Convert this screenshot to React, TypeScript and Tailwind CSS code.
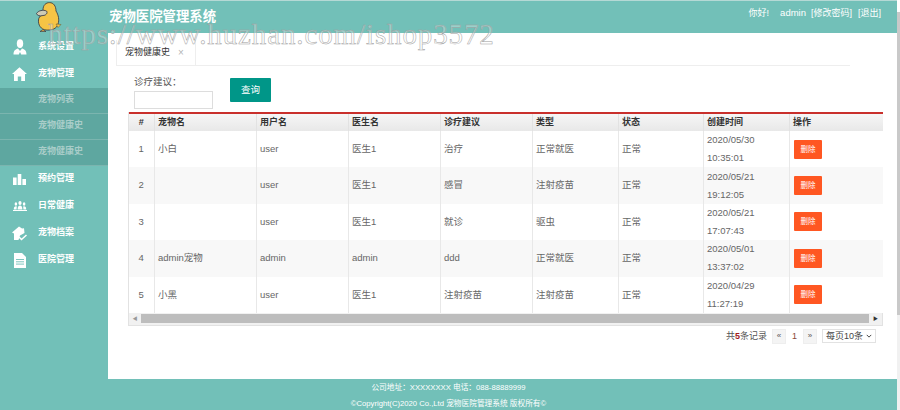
import type { ReactNode } from "react";

const cjk = "font-['Liberation_Sans','Noto_Sans_CJK_SC',sans-serif]";

const columns = [
  { label: "#", width: "w-[25px]", center: true },
  { label: "宠物名", width: "w-[102px]" },
  { label: "用户名", width: "w-[92px]" },
  { label: "医生名", width: "w-[92px]" },
  { label: "诊疗建议", width: "w-[92px]" },
  { label: "类型", width: "w-[86px]" },
  { label: "状态", width: "w-[85px]" },
  { label: "创建时间", width: "w-[86px]" },
  { label: "操作", width: "w-[94px]" },
];

const rows = [
  ["1", "小白", "user", "医生1", "治疗", "正常就医", "正常", "2020/05/30", "10:35:01"],
  ["2", "", "user", "医生1", "感冒", "注射疫苗", "正常", "2020/05/21", "19:12:05"],
  ["3", "", "user", "医生1", "就诊", "驱虫", "正常", "2020/05/21", "17:07:43"],
  ["4", "admin宠物", "admin", "admin", "ddd", "正常就医", "正常", "2020/05/01", "13:37:02"],
  ["5", "小黑", "user", "医生1", "注射疫苗", "注射疫苗", "正常", "2020/04/29", "11:27:19"],
];

function Duck() {
  return (
    <svg viewBox="0 0 26 30" className="h-[30px] w-[26px]">
      <path
        d="M7 8 C7 3 10 0.6 13.5 0.6 C17.5 0.6 20 4 20 9 C22.5 13 23.5 18 22 22 C21 27 15 28.5 10 28 C5 27.5 2 23 2.5 18 C2.7 15.5 4 14 6 13 Z"
        fill="#f6c445"
        stroke="#2f3140"
        strokeWidth="0.8"
      />
      <path d="M0.5 11.5 C2.5 8.5 7 7.5 10.5 9 C12 11 10 13.5 7 13.5 C4 14.5 1 13.5 0.5 11.5 Z" fill="#cfcbb5" stroke="#2f3140" strokeWidth="0.8" />
      <path d="M7 27.5 L4 29.5 L10 29.5 Z" fill="#f0b040" stroke="#2f3140" strokeWidth="0.6" />
      <path d="M20 22 L25 22.5 L22 25.5 Z" fill="#f6c445" stroke="#5a5330" strokeWidth="0.5" />
    </svg>
  );
}

function UserIcon() {
  return (
    <svg viewBox="0 0 14 16" className="h-[16px] w-[14px] fill-white">
      <ellipse cx="7" cy="4.6" rx="3.2" ry="4.4" />
      <path d="M0.5 15.5 C0.5 11.5 2.5 10 5 9.4 L7 12 L9 9.4 C11.5 10 13.5 11.5 13.5 15.5 L8.2 15.5 L7 13 L5.8 15.5 Z" />
    </svg>
  );
}

function HomeIcon() {
  return (
    <svg viewBox="0 0 15 14" className="h-[14px] w-[15px] fill-white">
      <path d="M7.5 0.3 L15 7 L13 7 L13 14 L9.2 14 L9.2 9.5 L5.8 9.5 L5.8 14 L2 14 L2 7 L0 7 Z" />
    </svg>
  );
}

function ChartIcon() {
  return (
    <svg viewBox="0 0 13 11" className="h-[11px] w-[13px] fill-white">
      <rect x="0" y="3.5" width="3.6" height="7.5" />
      <rect x="4.7" y="0" width="3.6" height="11" />
      <rect x="9.4" y="5" width="3.6" height="6" />
    </svg>
  );
}

function PeopleIcon() {
  return (
    <svg viewBox="0 0 14 10" className="h-[10px] w-[14px] fill-white">
      <ellipse cx="7" cy="2" rx="1.6" ry="2" />
      <path d="M4.6 8.4 C4.6 5.6 5.6 4.4 7 4.4 C8.4 4.4 9.4 5.6 9.4 8.4 Z" />
      <ellipse cx="2.9" cy="3" rx="1.3" ry="1.7" />
      <path d="M0.8 8.4 C0.8 6.4 1.6 5.2 2.9 5.2 L3.9 5.5 C3.6 6.4 3.6 7.4 3.6 8.4 Z" />
      <ellipse cx="11.1" cy="3" rx="1.3" ry="1.7" />
      <path d="M13.2 8.4 C13.2 6.4 12.4 5.2 11.1 5.2 L10.1 5.5 C10.4 6.4 10.4 7.4 10.4 8.4 Z" />
      <rect x="0" y="9" width="14" height="1" />
    </svg>
  );
}

function PetFileIcon() {
  return (
    <svg viewBox="0 0 15 15" className="h-[15px] w-[15px]">
      <path d="M0 6.5 L7 0.5 L10 2.5 L12 2.2 L12.5 7 L8 9.5 L6.5 14 L2 14 L2 7.5 Z" fill="#fff" />
      <path d="M7 11 L9.5 13.5 L14.5 9" fill="none" stroke="#fff" strokeWidth="1.5" />
    </svg>
  );
}

function DocIcon() {
  return (
    <svg viewBox="0 0 12 15" className="h-[15px] w-[12px]">
      <path d="M0 0 L8 0 L12 4 L12 15 L0 15 Z" fill="#fff" />
      <path d="M2 6.5 H10 M2 8.8 H10 M2 11.1 H10" stroke="#72c0b8" strokeWidth="0.9" />
    </svg>
  );
}

function MenuItem({ icon, label }: { icon: ReactNode; label: string }) {
  return (
    <div className="flex h-[27px] items-center">
      <div className="flex w-[39px] justify-center">{icon}</div>
      <span className="-ml-[1px] text-[9px] font-bold text-white">{label}</span>
    </div>
  );
}

function SubItem({ label }: { label: string }) {
  return (
    <div className="flex h-[26px] items-center border-b border-[#7bb5af] bg-[#5ea7a0] pl-[38px] text-[9px] font-bold text-[#a9cdc9]">
      {label}
    </div>
  );
}

export default function App() {
  return (
    <div className={`relative flex h-[410px] w-[900px] overflow-hidden bg-white ${cjk}`}>
      <div className="w-[897px] shrink-0">
        <header className="flex h-[33px] items-center border-t border-[#b5d9d5] bg-[#72c0b8] text-white">
          <div className="w-[109px] shrink-0" />
          <h1 className="text-[13.4px] font-bold">宠物医院管理系统</h1>
          <div className="ml-auto mb-[7px] flex items-center pr-[16px] text-[9px]">
            <span>你好!</span>
            <span className="ml-[11px] text-[9.5px]">admin</span>
            <span className="ml-[5px]">[修改密码]</span>
            <span className="ml-[6px]">[退出]</span>
          </div>
        </header>

        <div className="flex h-[346px]">
          <aside className="w-[108px] shrink-0 bg-[#72c0b8] pt-[0.5px]">
            <MenuItem icon={<UserIcon />} label="系统设置" />
            <MenuItem icon={<HomeIcon />} label="宠物管理" />
            <SubItem label="宠物列表" />
            <SubItem label="宠物健康史" />
            <SubItem label="宠物健康史" />
            <MenuItem icon={<ChartIcon />} label="预约管理" />
            <MenuItem icon={<PeopleIcon />} label="日常健康" />
            <MenuItem icon={<PetFileIcon />} label="宠物档案" />
            <MenuItem icon={<DocIcon />} label="医院管理" />
          </aside>

          <main className="min-w-0 flex-1 pl-[8px] pt-[7px]">
            <div className="mr-[47px] flex h-[26px] border-b border-[#eeeeee]">
              <div className="flex w-[80px] items-center gap-[8px] border-x border-[#eeeeee] bg-white pl-[8px] pt-[1px] text-[9px] text-[#333333]">
                宠物健康史
                <span className="text-[10px] leading-none text-[#b5b5b5]">×</span>
              </div>
            </div>

            <div className="flex h-[46px] items-start pl-[18px]">
              <label className="mt-[10px] flex flex-col text-[9.5px] leading-[12px] text-[#555555]">
                诊疗建议：
                <input className="mt-[3px] h-[18px] w-[79px] border border-[#dddddd] bg-white" />
              </label>
              <button className="ml-[17px] mt-[12px] h-[24px] w-[41px] rounded-[1px] bg-[#009688] text-[9.5px] text-white">
                查询
              </button>
            </div>

            <div className="ml-[12px] w-[755px] border-x border-b border-[#e2e2e2]">
              <table className="w-full table-fixed border-collapse border-t-2 border-t-[#c9302c] text-left text-[9.5px] text-[#666666]">
                <thead>
                  <tr className="h-[18px] bg-gradient-to-b from-[#f7f7f7] to-[#e8e8e8] text-[9px] font-bold text-[#333333]">
                    {columns.map((col) => (
                      <th
                        key={col.label}
                        className={`${col.width} border-l border-[#e2e2e2] px-[3.5px] first:border-l-0 ${col.center ? "text-center" : ""}`}
                      >
                        {col.label}
                      </th>
                    ))}
                  </tr>
                </thead>
                <tbody>
                  {rows.map((row, i) => (
                    <tr key={row[0]} className={`h-[36.4px] ${i % 2 === 1 ? "bg-[#f8f8f8]" : "bg-white"}`}>
                      <td className="text-center">{row[0]}</td>
                      {row.slice(1, 7).map((cell, j) => (
                        <td key={j} className="border-l border-[#e8e8e8] px-[3.5px]">
                          {cell}
                        </td>
                      ))}
                      <td className="border-l border-[#e8e8e8] px-[3.5px] leading-[18px]">
                        {row[7]}
                        <br />
                        {row[8]}
                      </td>
                      <td className="border-l border-[#e8e8e8] pl-[4.5px]">
                        <button className="h-[19px] w-[28px] rounded-[1px] bg-[#ff5722] text-[7.5px] text-white">
                          删除
                        </button>
                      </td>
                    </tr>
                  ))}
                </tbody>
              </table>
              <div className="flex h-[12px] items-center bg-[#f1f1f1]">
                <div className="flex w-[12px] justify-center text-[5px] leading-none text-[#999999]">◀</div>
                <div className="h-[9px] flex-1 bg-[#bdbdbd]" />
                <div className="flex w-[13px] justify-center text-[5px] leading-none text-[#333333]">▶</div>
              </div>
            </div>

            <div className="ml-[12px] mt-[3px] flex w-[748px] items-center justify-end text-[9px] text-[#555555]">
              <span>
                共<b className="text-[#a11b1b]">5</b>条记录
              </span>
              <span className="ml-[5px] flex h-[15px] w-[14px] items-center justify-center border border-[#eeeeee] bg-[#f4f4f4] text-[8px]">
                «
              </span>
              <span className="w-[17px] text-center text-[#8a4a3a]">1</span>
              <span className="flex h-[15px] w-[14px] items-center justify-center border border-[#eeeeee] bg-[#f4f4f4] text-[8px]">
                »
              </span>
              <span className="ml-[5px] flex h-[14px] w-[54px] items-center justify-between border border-[#e2e2e2] px-[3px] text-[#444444]">
                每页10条
                <svg viewBox="0 0 8 5" className="h-[4px] w-[6px]">
                  <path d="M1 1 L4 4 L7 1" fill="none" stroke="#333" strokeWidth="1.2" />
                </svg>
              </span>
            </div>
          </main>
        </div>

        <footer className="flex h-[31px] flex-col items-center bg-[#72c0b8] pt-[1px] text-[7.7px] leading-[15.5px] text-white">
          <p>公司地址：XXXXXXXX 电话：088-88889999</p>
          <p>©Copyright(C)2020 Co.,Ltd 宠物医院管理系统 版权所有©</p>
        </footer>
      </div>

      {/* page scrollbar strip */}
      <div className="flex-1 bg-[#f1f1f1]">
        <div className="h-[12px] bg-white" />
        <div className="h-[303px] bg-[#c9c9c9]" />
      </div>

      {/* logo sits over the header and sidebar */}
      <div className="absolute left-[36px] top-[2px]">
        <Duck />
      </div>

      {/* watermark over the whole page */}
      <div className="pointer-events-none absolute left-[48px] top-[13px] whitespace-nowrap font-['Liberation_Serif',serif] text-[29px] tracking-[0.88px] text-white/30 [-webkit-text-stroke:0.5px_#a0a0a0]">
        https://www.huzhan.com/ishop3572
      </div>
    </div>
  );
}
